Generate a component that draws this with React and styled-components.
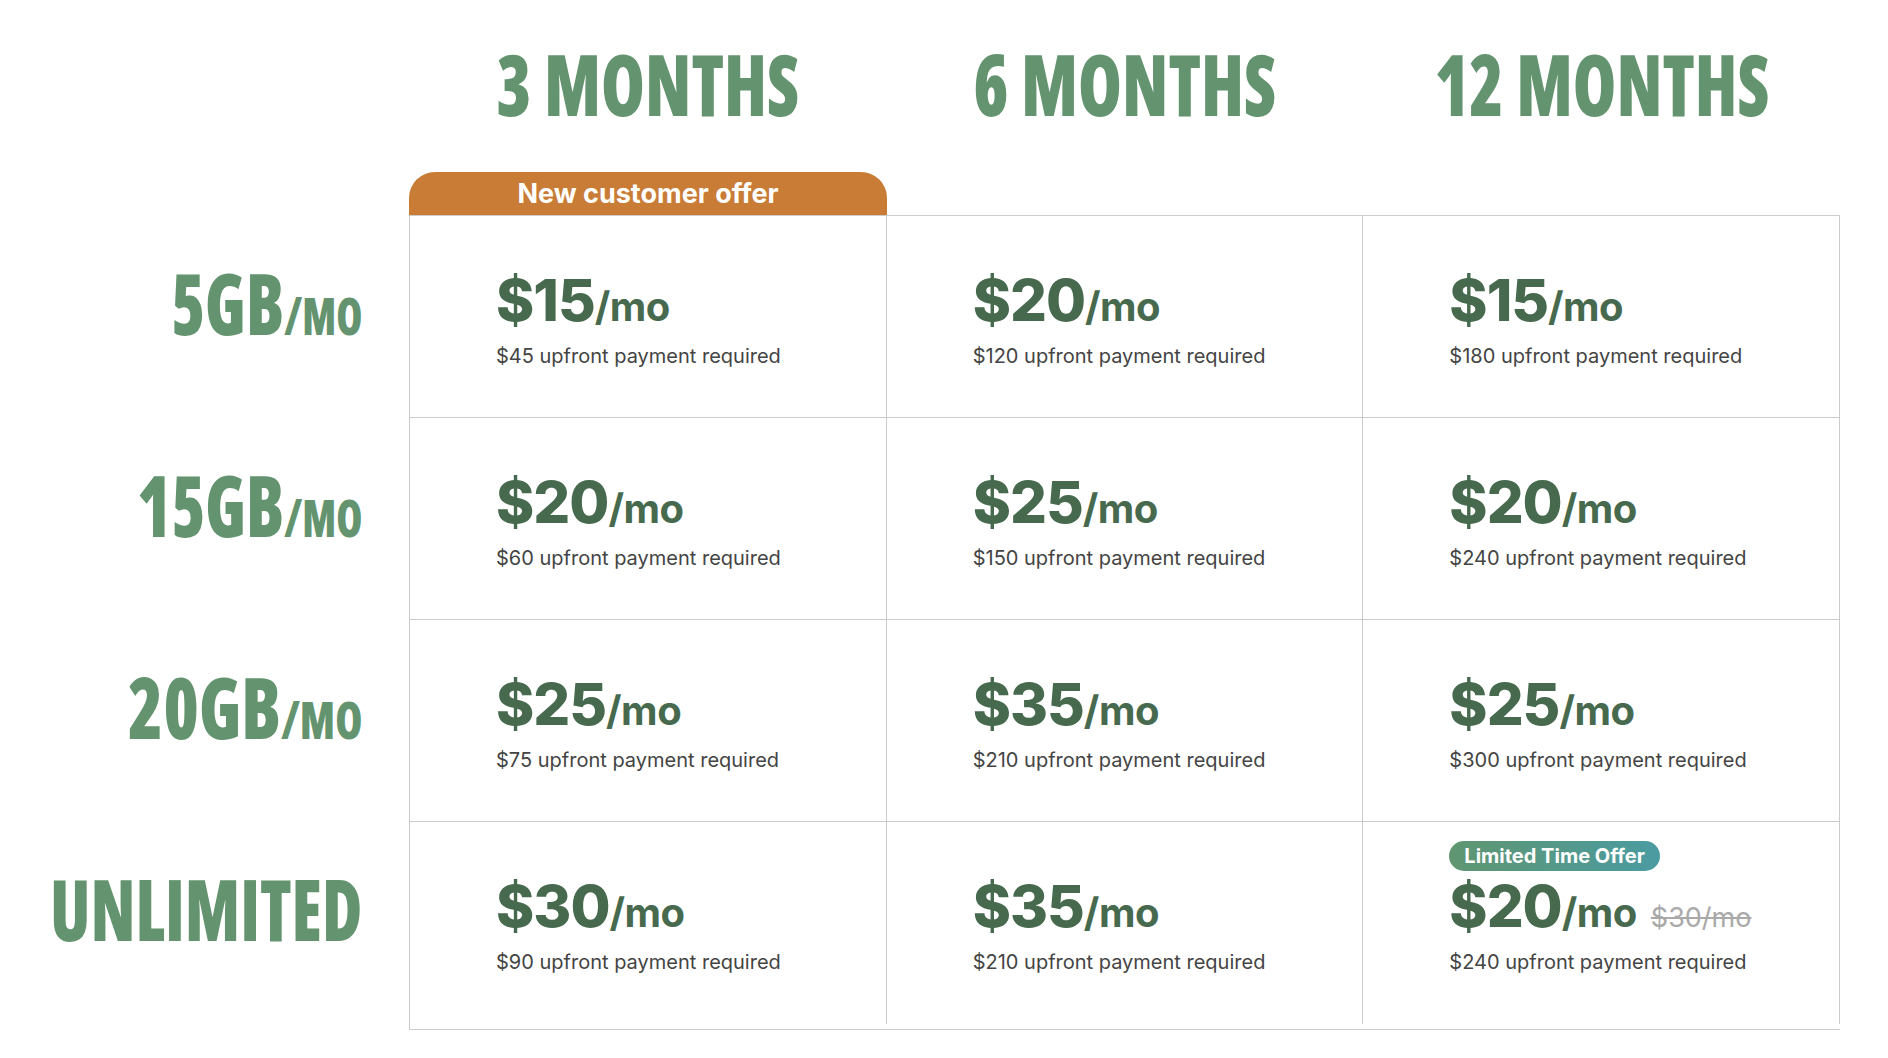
import { useLayoutEffect, useRef, useState } from "react";
import styled, { createGlobalStyle } from "styled-components";

const GREEN = "#64946f";
const DARK_GREEN = "#476a4f";
const LINE = "#cccccc";

const GlobalStyle = createGlobalStyle`
  body {
    margin: 0;
    background: #ffffff;
    font-family: Inter, "Noto Sans", sans-serif;
  }
`;

const Page = styled.div`
  width: 1888px;
  padding-top: 41px;
`;

const Columns = styled.div`
  display: grid;
  grid-template-columns: 409px repeat(3, 477px);
`;

const Display = styled.span`
  display: inline-block;
  flex-shrink: 0;
  font-family: "Open Sans", "DejaVu Sans Condensed", sans-serif;
  font-stretch: 75%;
  font-size: 85px;
  font-weight: 800;
  line-height: 1;
  color: ${GREEN};
  white-space: nowrap;
  transform-origin: center center;

  small {
    font-size: 52px;
  }
`;

function Squeezed({ width, children }) {
  const ref = useRef(null);
  const [scale, setScale] = useState(1);

  useLayoutEffect(() => {
    const measure = () => {
      const w = ref.current ? ref.current.offsetWidth : 0;
      if (w) setScale(width / w);
    };
    measure();
    if (document.fonts) document.fonts.ready.then(measure);
  }, [width]);

  return (
    <Display ref={ref} style={{ transform: `scaleX(${scale})` }}>
      {children}
    </Display>
  );
}

const Heading = styled.h2`
  margin: 0;
  min-width: 0;
  display: flex;
  justify-content: center;
  justify-content: unsafe center;
`;

const BadgeRow = styled(Columns)`
  margin-top: 46px;
`;

const OfferTab = styled.div`
  grid-column: 2;
  margin-right: -1px;
  height: 43px;
  border-radius: 26px 26px 0 0;
  background: #c97c35;
  color: #ffffff;
  font-size: 27px;
  font-weight: 700;
  line-height: 43px;
  text-align: center;
`;

const Body = styled.div`
  display: grid;
  grid-template-columns: 409px 1431px;
`;

const Labels = styled.div`
  display: grid;
  grid-template-columns: minmax(0, 1fr);
  grid-auto-rows: 202px;
  padding-top: 1px;
`;

const Label = styled.div`
  min-width: 0;
  display: flex;
  justify-content: flex-end;
  justify-content: unsafe flex-end;
  align-items: flex-start;
  padding: 44px 47px 0 0;

  & > span {
    transform-origin: right center;
  }
`;

const Table = styled.div`
  border-left: 1px solid ${LINE};
  border-bottom: 1px solid ${LINE};
  padding-bottom: 5px;
`;

const Grid = styled.div`
  display: grid;
  grid-template-columns: repeat(3, 1fr);
  border-top: 1px solid ${LINE};
`;

const Cell = styled.div`
  box-sizing: border-box;
  height: 202px;
  padding: 55px 0 0 86px;
  border-right: 1px solid ${LINE};
  border-bottom: ${(p) => (p.$last ? "none" : `1px solid ${LINE}`)};
`;

const Price = styled.div`
  position: relative;
  display: flex;
  align-items: baseline;
  line-height: 1;
  color: ${DARK_GREEN};
`;

const Amount = styled.span`
  font-size: 58px;
  font-weight: 800;
  letter-spacing: -1px;
`;

const Per = styled.span`
  font-size: 40px;
  font-weight: 700;
  letter-spacing: -0.5px;
`;

const OldPrice = styled.span`
  margin-left: 14px;
  font-size: 27px;
  font-weight: 400;
  color: #a9a9a9;
  text-decoration: line-through;
`;

const LimitedBadge = styled.span`
  position: absolute;
  left: 0;
  bottom: calc(100% + 6px);
  height: 30px;
  padding: 0 15px;
  border-radius: 15px;
  background: linear-gradient(90deg, #5f9670, #4a9ba2);
  color: #ffffff;
  font-size: 20px;
  font-weight: 700;
  line-height: 30px;
  white-space: nowrap;
`;

const Upfront = styled.div`
  margin-top: 15px;
  font-size: 20px;
  line-height: 24px;
  color: #444444;
`;

const terms = [
  { text: "3 MONTHS", width: 303 },
  { text: "6 MONTHS", width: 303 },
  { text: "12 MONTHS", width: 335 },
];

const plans = [
  {
    size: "5GB",
    width: 191,
    perMonth: true,
    prices: [
      { mo: 15, up: 45 },
      { mo: 20, up: 120 },
      { mo: 15, up: 180 },
    ],
  },
  {
    size: "15GB",
    width: 225,
    perMonth: true,
    prices: [
      { mo: 20, up: 60 },
      { mo: 25, up: 150 },
      { mo: 20, up: 240 },
    ],
  },
  {
    size: "20GB",
    width: 234,
    perMonth: true,
    prices: [
      { mo: 25, up: 75 },
      { mo: 35, up: 210 },
      { mo: 25, up: 300 },
    ],
  },
  {
    size: "UNLIMITED",
    width: 312,
    perMonth: false,
    prices: [
      { mo: 30, up: 90 },
      { mo: 35, up: 210 },
      { mo: 20, up: 240, was: 30, limited: true },
    ],
  },
];

export default function App() {
  return (
    <Page>
      <GlobalStyle />
      <Columns>
        <div />
        {terms.map((t) => (
          <Heading key={t.text}>
            <Squeezed width={t.width}>{t.text}</Squeezed>
          </Heading>
        ))}
      </Columns>

      <BadgeRow>
        <OfferTab>New customer offer</OfferTab>
      </BadgeRow>

      <Body>
        <Labels>
          {plans.map((plan) => (
            <Label key={plan.size}>
              <Squeezed width={plan.width}>
                {plan.size}
                {plan.perMonth && <small>/MO</small>}
              </Squeezed>
            </Label>
          ))}
        </Labels>

        <Table>
          <Grid>
            {plans.map((plan, r) =>
              plan.prices.map((p, c) => (
                <Cell key={`${r}-${c}`} $last={r === plans.length - 1}>
                  <Price>
                    {p.limited && <LimitedBadge>Limited Time Offer</LimitedBadge>}
                    <Amount>${p.mo}</Amount>
                    <Per>/mo</Per>
                    {p.was && <OldPrice>${p.was}/mo</OldPrice>}
                  </Price>
                  <Upfront>${p.up} upfront payment required</Upfront>
                </Cell>
              ))
            )}
          </Grid>
        </Table>
      </Body>
    </Page>
  );
}
